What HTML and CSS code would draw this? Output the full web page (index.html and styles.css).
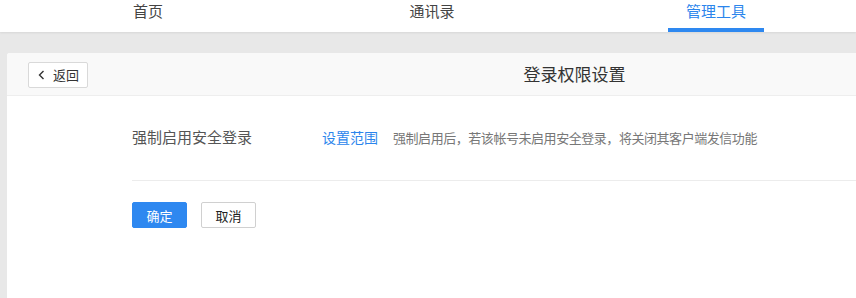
FILE: index.html
```html
<!DOCTYPE html>
<html lang="zh-CN">
<head>
<meta charset="utf-8">
<title>登录权限设置</title>
<link rel="stylesheet" href="styles.css">
</head>
<body>
<nav class="topnav">
  <div class="tab"><span class="tab-label">首页</span></div>
  <div class="tab"><span class="tab-label">通讯录</span></div>
  <div class="tab active"><span class="tab-label">管理工具</span></div>
</nav>
<main class="page">
  <section class="card">
    <header class="card-head">
      <button class="back-btn" type="button">
        <svg class="chev" width="7" height="10" viewBox="0 0 7 10"><path d="M5.5 1 L1.5 5 L5.5 9" fill="none" stroke="#333" stroke-width="1.4"/></svg>
        <span>返回</span>
      </button>
      <h1 class="card-title">登录权限设置</h1>
    </header>
    <div class="card-body">
      <div class="setting-row">
        <span class="setting-label">强制启用安全登录</span>
        <a class="setting-link" href="#">设置范围</a>
        <span class="setting-desc">强制启用后，若该帐号未启用安全登录，将关闭其客户端发信功能</span>
      </div>
      <div class="divider"></div>
      <div class="actions">
        <button class="btn btn-primary" type="button">确定</button>
        <button class="btn btn-default" type="button">取消</button>
      </div>
    </div>
  </section>
</main>
</body>
</html>
```

FILE: styles.css
```css
* { box-sizing: border-box; }
html, body {
  margin: 0;
  padding: 0;
  height: 100%;
  overflow: hidden;
}
body {
  font-family: "Noto Sans CJK SC", "Microsoft YaHei", sans-serif;
  background: #e8e8e8;
  color: #333;
  display: flex;
  flex-direction: column;
}
.topnav {
  height: 32px;
  background: #fff;
  display: grid;
  grid-template-columns: 284px 284px 284px;
  padding-left: 6px;
  box-shadow: 0 1px 2px rgba(0,0,0,0.08);
  position: relative;
  z-index: 1;
  flex: none;
}
.tab {
  display: flex;
  justify-content: center;
}
.tab-label {
  display: block;
  height: 32px;
  padding: 0 18px;
  font-size: 15px;
  line-height: 22px;
  color: #444;
}
.tab.active .tab-label {
  color: #2b85ec;
  border-bottom: 4px solid #2e88f0;
}
.page {
  flex: 1;
  padding: 21px 0 0 7px;
  overflow: hidden;
}
.card {
  width: 1135px;
  height: 100%;
  background: #fff;
  border-radius: 3px 3px 0 0;
}
.card-head {
  height: 43px;
  background: #f9f9f9;
  border-bottom: 1px solid #eeeeee;
  border-radius: 3px 3px 0 0;
  display: grid;
  grid-template-columns: 1fr auto 1fr;
  align-items: center;
  padding-left: 21px;
}
.back-btn {
  justify-self: start;
  height: 26px;
  width: 60px;
  padding: 0 0 0 9px;
  border: 1px solid #d9d9d9;
  border-radius: 2px;
  background: #fff;
  font-family: inherit;
  font-size: 13px;
  color: #333;
  display: flex;
  align-items: center;
  gap: 8px;
  margin-top: 1px;
}
.card-title {
  margin: 0;
  font-size: 17px;
  font-weight: normal;
  color: #333;
  line-height: 24px;
  margin-left: -21px;
}
.card-body {
  padding-left: 125px;
}
.setting-row {
  display: flex;
  align-items: baseline;
  margin-top: 30px;
  height: 22px;
  line-height: 22px;
}
.setting-label {
  width: 190px;
  font-size: 15px;
  color: #555;
}
.setting-link {
  font-size: 14px;
  color: #2b85ec;
  text-decoration: none;
  margin-right: 15px;
}
.setting-desc {
  font-size: 13px;
  letter-spacing: -0.45px;
  color: #777;
}
.divider {
  height: 1px;
  background: #ececec;
  margin-top: 32px;
}
.actions {
  display: flex;
  gap: 14px;
  margin-top: 21px;
}
.btn {
  height: 26px;
  width: 55px;
  font-family: inherit;
  font-size: 13px;
  border-radius: 2px;
  padding: 0;
}
.btn-primary {
  background: #2e88f0;
  border: 1px solid #2e88f0;
  color: #fff;
}
.btn-default {
  background: #fff;
  border: 1px solid #d0d0d0;
  color: #222;
}
```
